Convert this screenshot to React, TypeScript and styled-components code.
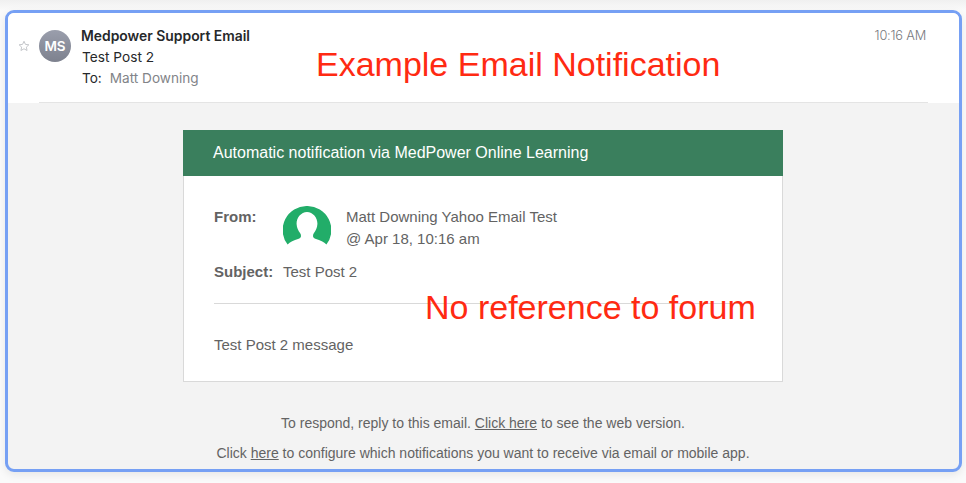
import React from "react";
import styled, { createGlobalStyle } from "styled-components";

const GlobalStyle = createGlobalStyle`
  html, body {
    margin: 0;
    padding: 0;
    background: #f7f7f7;
  }
  #root {
    width: 966px;
    height: 483px;
    overflow: hidden;
  }
`;

// Outer frame with blue outline
const Page = styled.div`
  width: 966px;
  height: 483px;
  box-sizing: border-box;
  padding: 10px 4px 11px 5px;
  background: linear-gradient(#f0f0f0, #fafafa 10px);
`;

const Frame = styled.div`
  box-sizing: border-box;
  height: 100%;
  border: 3px solid #76a0f4;
  border-radius: 9px;
  background: #f3f3f3;
  overflow: hidden;
  box-shadow: 0 3px 8px rgba(0, 0, 0, 0.08);
`;

// Mail header
const Header = styled.div`
  position: relative;
  height: 90px;
  background: #fff;
  padding: 0 31px;
  box-sizing: border-box;
`;

const HeaderRow = styled.div`
  display: flex;
  align-items: flex-start;
  height: 90px;
  border-bottom: 1px solid #e4e4e4;
  box-sizing: border-box;
  padding-top: 13px;
  font-family: Inter, "Liberation Sans", sans-serif;
`;

const StarIcon = styled.svg`
  position: absolute;
  left: 10px;
  top: 27px;
`;

const Avatar = styled.div`
  width: 32px;
  height: 32px;
  margin-top: 4px;
  border-radius: 50%;
  background: linear-gradient(#9a9eac, #7d818e);
  color: #fff;
  font-size: 13.5px;
  font-weight: 600;
  line-height: 32px;
  text-align: center;
  flex: none;
`;

const Sender = styled.div`
  margin-left: 10px;
  flex: 1;
  font-size: 13.7px;
  color: #26282a;
`;

const SenderName = styled.div`
  font-size: 13.9px;
  font-weight: 600;
  line-height: 21px;
`;

const SubjectLine = styled.div`
  margin-left: 1px;
  line-height: 21px;
`;

const ToLine = styled.div`
  margin-left: 1px;
  line-height: 21px;
  font-size: 13.6px;
`;

const ToName = styled.span`
  margin-left: 8px;
  color: #828488;
`;

const Time = styled.div`
  margin-top: 1px;
  margin-right: 2px;
  font-size: 12.8px;
  font-weight: 300;
  letter-spacing: -0.2px;
  color: #77797d;
  line-height: 18px;
`;

const Annotation = styled.div<{ $top: number; $left: number; $size: number }>`
  position: absolute;
  top: ${({ $top }) => $top}px;
  left: ${({ $left }) => $left}px;
  font-family: "Liberation Sans", Arial, sans-serif;
  font-size: ${({ $size }) => $size}px;
  color: #ff2a12;
  white-space: nowrap;
  line-height: 1.2;
`;

// Mail body
const Body = styled.div`
  display: flex;
  flex-direction: column;
  align-items: center;
  padding: 27px 1px 0 0;
  font-family: "Liberation Sans", Arial, sans-serif;
  color: #636363;
`;

const Card = styled.div`
  position: relative;
  width: 600px;
  box-sizing: border-box;
  background: #fff;
  border: 1px solid #d9d9d9;
  border-top: 0;
`;

const Banner = styled.div`
  margin: 0 -1px;
  height: 46px;
  background: #3a7f5d;
  color: #fff;
  font-size: 16px;
  line-height: 46px;
  padding-left: 30px;
`;

const CardBody = styled.div`
  padding: 30px 30px 0 30px;
  font-size: 15px;
`;

const FromRow = styled.div`
  display: flex;
  align-items: flex-start;
`;

const Label = styled.div<{ $width: number }>`
  width: ${({ $width }) => $width}px;
  font-weight: 700;
  line-height: 22px;
  flex: none;
`;

const ProfileIcon = styled.svg`
  display: block;
  flex: none;
`;

const FromText = styled.div`
  margin-left: 15px;
  line-height: 22px;
`;

const SubjectRow = styled.div`
  display: flex;
  margin-top: 7px;
  line-height: 22px;
`;

const Divider = styled.div`
  margin-top: 20px;
  height: 1px;
  background: #d9d9d9;
`;

const Message = styled.div`
  margin-top: 32px;
  padding-bottom: 27px;
  line-height: 18px;
`;

const Footer = styled.div`
  margin-top: 33px;
  font-size: 14px;
  text-align: center;
  line-height: 16px;
`;

const FooterLine = styled.p`
  margin: 0 0 14px;
`;

const FooterLink = styled.a`
  color: #636363;
  text-decoration: underline;
`;

export default function App() {
  return (
    <Page>
      <GlobalStyle />
      <Frame>
        <Header>
          <StarIcon width="12" height="12" viewBox="0 0 24 24" fill="none" stroke="#c4c6ca" strokeWidth="2">
            <path d="M12 2.5l2.9 6.3 6.9.8-5.1 4.6 1.400 6.800-6.100-3.500-6.100 3.500 1.400-6.800L2.200 9.600l6.900-.8z" />
          </StarIcon>
          <HeaderRow>
            <Avatar>MS</Avatar>
            <Sender>
              <SenderName>Medpower Support Email</SenderName>
              <SubjectLine>Test Post 2</SubjectLine>
              <ToLine>
                To:<ToName>Matt Downing</ToName>
              </ToLine>
            </Sender>
            <Time>10:16 AM</Time>
          </HeaderRow>
          <Annotation $top={31} $left={308} $size={34}>
            Example Email Notification
          </Annotation>
        </Header>
        <Body>
          <Card>
            <Banner>Automatic notification via MedPower Online Learning</Banner>
            <CardBody>
              <FromRow>
                <Label $width={69}>From:</Label>
                <ProfileIcon width="48" height="48" viewBox="0 0 48 48">
                  <path
                    fill="#22ad69"
                    d="M24 0a24 24 0 0 1 19.400 38.600c-2.200-2.800-6.500-4.200-10.400-5.600-2-.7-3-1.600-3-3 0-1 .2-2 .8-2.800 2-2.600 3.400-5.400 3.600-9.200.2-6-4.400-12-10.400-12s-10.600 6-10.400 12c.2 3.800 1.600 6.600 3.600 9.200.6.8.8 1.800.8 2.800 0 1.400-1 2.300-3 3-3.900 1.400-8.200 2.800-10.400 5.600A24 24 0 0 1 24 0z"
                  />
                </ProfileIcon>
                <FromText>
                  Matt Downing Yahoo Email Test
                  <br />@ Apr 18, 10:16 am
                </FromText>
              </FromRow>
              <SubjectRow>
                <Label $width={69}>Subject:</Label>
                Test Post 2
              </SubjectRow>
              <Divider />
              <Message>Test Post 2 message</Message>
            </CardBody>
            <Annotation $top={157} $left={241} $size={34}>
              No reference to forum
            </Annotation>
          </Card>
          <Footer>
            <FooterLine>
              To respond, reply to this email. <FooterLink>Click here</FooterLink> to see the web version.
            </FooterLine>
            <FooterLine>
              Click <FooterLink>here</FooterLink> to configure which notifications you want to receive via email or mobile app.
            </FooterLine>
          </Footer>
        </Body>
      </Frame>
    </Page>
  );
}
